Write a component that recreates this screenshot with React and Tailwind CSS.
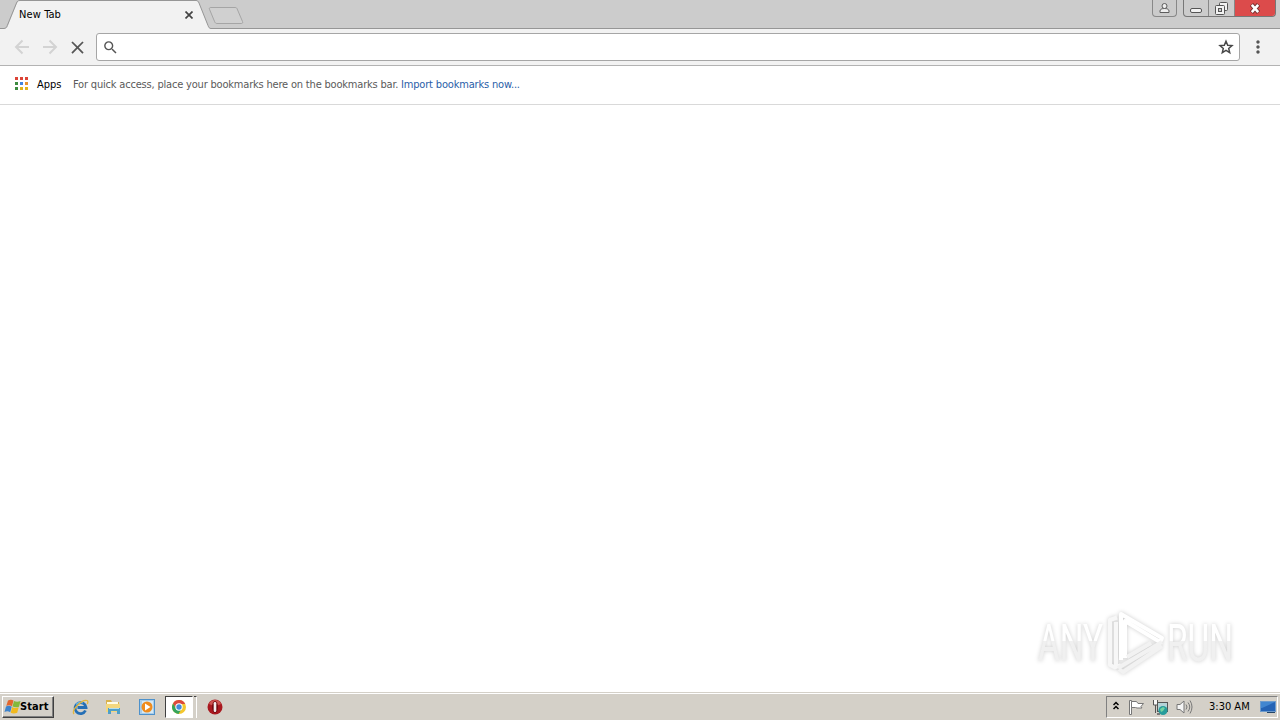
import { MdClose, MdMoreVert, MdSearch } from "react-icons/md";

const appDots = [
  "bg-[#dc4437]",
  "bg-[#dc4437]",
  "bg-[#dc4437]",
  "bg-[#3d8b40]",
  "bg-[#4285e0]",
  "bg-[#e8922e]",
  "bg-[#3d8b40]",
  "bg-[#e0b41c]",
  "bg-[#e0b41c]",
];

function TabStrip() {
  return (
    <div className="flex h-[29px] bg-[#cccccc]">
      <div className="relative flex h-[29px] w-[207px] shrink-0 items-center pl-[19px]">
        <svg className="absolute left-0 top-0" width="250" height="29" viewBox="0 0 250 29" fill="none">
          <path d="M0 28.5H5C7 28 7.500 27 8 25.500L17 3C17.700 1.300 18.500.5 20 .5H196C197.500.5 198.300 1.300 199 3L208 25.500C208.700 27.300 209.300 28.500 211 28.500V29H0Z" fill="#f2f2f2" />
          <path d="M0 28.500H4C6 28.300 6.500 27.500 7.300 25.500L16.500 3C17.300 1.300 18 .5 20 .5H196C197.500.5 198.300 1.300 199 3L208 25.500C208.800 27.500 209.300 28.500 211 28.500" stroke="#969696" />
          <path d="M211 7.500H235C236.300 7.500 236.800 8 237.200 9L242.500 21.500C243 22.900 242.500 23.500 241.300 23.500H217C215.800 23.500 215.200 22.900 214.700 21.800L209.500 9.300C209 8 209.700 7.500 211 7.500Z" fill="#d0d0d0" stroke="#a5a5a5" />
        </svg>
        <span className="relative w-[42px] whitespace-nowrap pt-[2px] text-[11px] tracking-[0.1px] text-black">New Tab</span>
        <svg className="relative ml-[124px] mt-px shrink-0" width="8" height="8" viewBox="0 0 8 8" stroke="#444" strokeWidth="1.7">
          <path d="M.5.5l7 7M7.500.5l-7 7" />
        </svg>
      </div>
      <div className="ml-1 flex grow items-start justify-end border-b border-[#969696] pr-[4px]">
        <div className="mr-[6px] flex h-[17px] w-[25px] items-center justify-center rounded-b-[4px] border border-t-0 border-[#888] bg-[#cbcbcb]">
          <svg width="11" height="12" viewBox="0 0 11 12" fill="#eee" stroke="#5c5c5c">
            <path d="M1 10.500V9c0-1.500 1.500-2.500 4.500-2.500S10 7.500 10 9v1.500Z" />
            <circle cx="5.500" cy="4" r="2.500" />
          </svg>
        </div>
        <div className="flex h-[17px] w-[93px] overflow-hidden rounded-b-[4px] border border-t-0 border-[#777]">
          <div className="flex w-[25px] items-center justify-center border-r border-[#888]">
            <svg className="mt-1" width="12" height="5" fill="#f2f2f2" stroke="#555">
              <rect x=".5" y=".5" width="11" height="4" rx="1.500" />
            </svg>
          </div>
          <div className="flex w-[26px] items-center justify-center border-r border-[#888] pr-px">
            <svg width="13" height="13" fill="#f2f2f2" stroke="#555">
              <rect x="4.500" y=".5" width="8" height="8" rx="1" />
              <rect x=".5" y="3.500" width="9" height="9" rx="1" />
              <rect x="3.500" y="6.500" width="3" height="3" fill="#ccc" />
            </svg>
          </div>
          <div className="flex grow items-center justify-center bg-[#dc4b4b] pr-px">
            <svg width="12" height="11" viewBox="0 0 12 11" fill="none">
              <path d="M2.500 1.500l7 8M9.500 1.500l-7 8" stroke="#713030" strokeWidth="4.400" />
              <path d="M2.800 1.800l6.400 7.400M9.200 1.800L2.800 9.200" stroke="#fff" strokeWidth="2.600" />
            </svg>
          </div>
        </div>
      </div>
    </div>
  );
}

function Toolbar() {
  return (
    <div className="flex h-[37px] items-center border-b border-[#b3b3b3] bg-[#f2f2f2] pl-3">
      <svg width="20" height="20" viewBox="0 0 20 20" fill="none" stroke="#d3d3d3" strokeWidth="2">
        <path d="M17 10H4.500M10.500 3.500L4 10l6.500 6.500" />
      </svg>
      <svg className="ml-2" width="20" height="20" viewBox="0 0 20 20" fill="none" stroke="#d3d3d3" strokeWidth="2">
        <path d="M3 10h12.500M9.500 3.500L16 10l-6.500 6.500" />
      </svg>
      <MdClose size={21} className="ml-[7px] text-[#555]" />
      <div className="ml-2 flex h-7 w-[1144px] items-center justify-between rounded-[3px] border border-[#a6a6a6] bg-white px-[5px]">
        <MdSearch size={17} className="text-[#555]" />
        <svg width="16" height="16" viewBox="0 0 16 16" fill="none" stroke="#484848" strokeWidth="1.5">
          <path d="M8 2.200l1.700 4 4.300.4-3.300 2.800 1 4.200L8 11.400l-3.700 2.200 1-4.200L2 6.600l4.300-.4Z" />
        </svg>
      </div>
      <MdMoreVert size={20} className="ml-2 text-[#555]" />
    </div>
  );
}

function BookmarksBar() {
  return (
    <div className="flex h-[39px] items-center border-b border-[#d9d9d9] bg-white pl-[15px] text-[11px]">
      <div className="-mt-[3px] grid grid-cols-3 gap-[2px]">
        {appDots.map((color, i) => (
          <span key={i} className={`size-[3px] ${color}`} />
        ))}
      </div>
      <span className="ml-[9px] w-[36px] text-black">Apps</span>
      <span className="w-[328px] whitespace-nowrap tracking-[-0.19px] text-[#5a5a5a]">
        For quick access, place your bookmarks here on the bookmarks bar.
      </span>
      <span className="whitespace-nowrap tracking-[-0.17px] text-[#2a5ea8]">Import bookmarks now...</span>
    </div>
  );
}

function Watermark() {
  return (
    <svg width="204" height="76" viewBox="0 0 204 76" className="overflow-visible drop-shadow-[0_0_2px_rgba(0,0,0,0.2)]">
      <defs>
        <linearGradient id="fade" gradientUnits="userSpaceOnUse" x1="0" y1="0" x2="0" y2="76">
          <stop offset="0.49" stopColor="#ffffff" />
          <stop offset="0.49" stopColor="#f0f0f0" />
        </linearGradient>
      </defs>
      <g fill="url(#fade)" fontFamily="Roboto, sans-serif" fontSize="52">
        <text x="4" y="56.500" textLength="65" lengthAdjust="spacingAndGlyphs">ANY</text>
        <text x="133" y="56.500" textLength="66" lengthAdjust="spacingAndGlyphs">RUN</text>
      </g>
      <g fill="none" strokeWidth="4" strokeLinejoin="round">
        <path d="M83 13.500L76 16V61L82 64M82 18V63L87 61" stroke="#f7f7f7" />
        <path d="M87 56V10L128 34L126 38L91 17V54" stroke="#fff" />
        <path d="M93 53L117 39M128 38L84 64M128 42L89 68L85 65" stroke="#f2f2f2" />
      </g>
    </svg>
  );
}

function WindowsFlag() {
  return (
    <svg className="shrink-0" width="17" height="16" viewBox="0 0 17 16">
      <path d="M4 1.500Q7 0 9.500 1.500L8 7.200Q5 5.500 2.300 7Z" fill="#e3662d" />
      <path d="M10 2Q13 3.500 16.500 2L15 7.700Q11.500 9 8.500 7.500Z" fill="#83b83b" />
      <path d="M2 7.500Q5 6 7.700 7.700L6.200 13.200Q3.500 11.500.5 13Z" fill="#3d83cc" />
      <path d="M8.200 8Q11 9.700 14.700 8.200L13.200 13.800Q9.500 15.300 6.700 13.700Z" fill="#f1b91e" />
    </svg>
  );
}

function ExplorerIcon() {
  return (
    <svg width="17" height="17" viewBox="0 0 17 17" fill="none">
      <path d="M13.500 11.500A5.500 5.500 0 1 1 14 8.500H5.500" stroke="#256fb5" strokeWidth="2.800" />
      <path d="M4 5.500A6 6 0 0 1 11 4" stroke="#65b8ed" strokeWidth="1.200" />
      <path d="M2 15C-1 11 10 0 15 1.500c1 .5 1 2 .3 3.500" stroke="#e2b63d" strokeWidth="1.300" />
    </svg>
  );
}

function FolderIcon() {
  return (
    <svg width="16" height="16" viewBox="0 0 16 16">
      <path d="M1 1h5l1 2h7v9H1Z" fill="#d9b24e" />
      <path d="M2 3h11v2H2Z" fill="#fffce5" />
      <path d="M1 5h14v8H1Z" fill="#f3d77e" />
      <path d="M3 9h12v6h-3v-3H6v3H3Z" fill="#4f9fc8" />
      <path d="M4 9h10v1H4Z" fill="#b3def0" />
    </svg>
  );
}

function PlayerIcon() {
  return (
    <svg width="16" height="16" viewBox="0 0 16 16">
      <rect x=".5" y=".5" width="15" height="15" fill="#a8cdea" stroke="#4d91cb" />
      <rect x="3" y="2" width="11" height="12" fill="#d5e9f5" />
      <circle cx="8" cy="8" r="5.500" fill="#ef8c1d" />
      <path d="M6 4.500L11.500 8L6 11.500Z" fill="#fff" />
    </svg>
  );
}

function ChromeIcon() {
  return (
    <svg width="16" height="16" viewBox="0 0 16 16">
      <circle cx="8" cy="8" r="7" fill="#f4c72e" />
      <path d="M2 4.400A7 7 0 0 1 14.200 5H8L5 9.700Z" fill="#dc4a3d" />
      <path d="M2 4.400A7 7 0 0 0 7.500 15l3.300-5.500H5Z" fill="#35a45a" />
      <circle cx="8" cy="8" r="3.700" fill="#fff" />
      <circle cx="8" cy="8" r="2.700" fill="#438bdc" />
    </svg>
  );
}

function OperaIcon() {
  return (
    <svg width="16" height="16" viewBox="0 0 16 16">
      <circle cx="8" cy="8" r="7.500" fill="#a9181f" />
      <path d="M2 5a6.500 6.500 0 0 1 12 0Q8 8 2 5Z" fill="#cf5552" />
      <ellipse cx="8" cy="8" rx="3" ry="6" fill="#720a10" />
      <rect x="6.700" y="3" width="2.600" height="10" rx="1.300" fill="#f4eeee" />
    </svg>
  );
}

function Tray() {
  return (
    <div className="flex h-[22px] w-[172px] items-center border border-t-[#808080] border-r-white border-b-white border-l-[#808080] pl-[6px]">
      <svg className="-mt-[3px]" width="6" height="9" fill="none" stroke="#000" strokeWidth="1.500">
        <path d="M.5 4L3 1.500L5.500 4M.5 8L3 5.500L5.500 8" />
      </svg>
      <svg className="ml-[9px]" width="17" height="17" viewBox="0 0 17 17" fill="#fff" stroke="#777">
        <path d="M1.500 1.500h2v14h-2Z" />
        <path d="M3.500 2.500h5l1.500 2h5.500l-2.500 3 1 1.500H9L7.500 8.500h-4Z" />
      </svg>
      <svg className="ml-[7px]" width="17" height="17" viewBox="0 0 17 17">
        <rect x="5.500" y="3.500" width="10" height="9" fill="#b5d3d7" stroke="#555" />
        <path d="M1.500 1v5h4V1M3.500 6v8" fill="#f7f7f7" stroke="#555" />
        <circle cx="11" cy="11.500" r="4.500" fill="#269c9b" />
        <path d="M8 10l3-2 2 1-2 3-2 1Z" fill="#75d1a0" />
        <path d="M5 14h3v2H5Z" fill="#777" />
      </svg>
      <svg className="ml-[7px]" width="17" height="16" viewBox="0 0 17 16" fill="none" stroke="#777">
        <path d="M1 5.500h3L8 2v12l-4-3.500H1Z" fill="#f5f5f5" />
        <path d="M10 5.500q2 2.500 0 5M12 3.500q3.500 4.500 0 9M14 1.500q4 6.500 0 13" />
      </svg>
      <span className="ml-[16px] w-[42px] whitespace-nowrap pt-px text-[11px] text-black">3:30 AM</span>
      <svg className="ml-[9px]" width="16" height="14" viewBox="0 0 16 14">
        <rect x=".5" y="1.500" width="15" height="10" fill="#2463b5" stroke="#6d9bcc" />
        <path d="M1 2h14L2 8H1Z" fill="#4186d0" />
        <path d="M7 12h8v1H7Z" fill="#234568" />
      </svg>
    </div>
  );
}

function Taskbar() {
  return (
    <div className="flex h-7 items-start justify-between border-t border-[#d4d0c8] bg-[#d4d0c8] px-[2px] pt-[3px] shadow-[inset_0_1px_0_#fff]">
      <div className="flex items-center">
        <button className="flex h-[22px] w-[52px] items-center border border-t-white border-r-[#404040] border-b-[#404040] border-l-white pl-px shadow-[inset_-1px_-1px_0_#808080]">
          <WindowsFlag />
          <span className="-ml-px pt-px text-[11px] font-bold tracking-[0.1px] text-black">Start</span>
        </button>
        <div className="ml-[18px] flex items-center">
          <ExplorerIcon />
          <div className="ml-4">
            <FolderIcon />
          </div>
          <div className="ml-[18px]">
            <PlayerIcon />
          </div>
          <div className="ml-[10px] flex h-[22px] w-[28px] items-center justify-center border border-t-[#404040] border-r-white border-b-white border-l-[#404040] bg-white">
            <ChromeIcon />
          </div>
          <div className="ml-px h-[22px] w-[3px] border-t border-r border-t-[#404040] border-r-white bg-[#d4d0c8]" />
          <div className="ml-[10px]">
            <OperaIcon />
          </div>
        </div>
      </div>
      <Tray />
    </div>
  );
}

export default function App() {
  return (
    <div className="flex h-[720px] w-[1280px] flex-col overflow-hidden bg-white font-['DejaVu_Sans_Condensed','DejaVu_Sans',sans-serif]">
      <TabStrip />
      <Toolbar />
      <BookmarksBar />
      <main className="flex grow items-end justify-end pr-[42px] pb-[12px]">
        <Watermark />
      </main>
      <Taskbar />
    </div>
  );
}
